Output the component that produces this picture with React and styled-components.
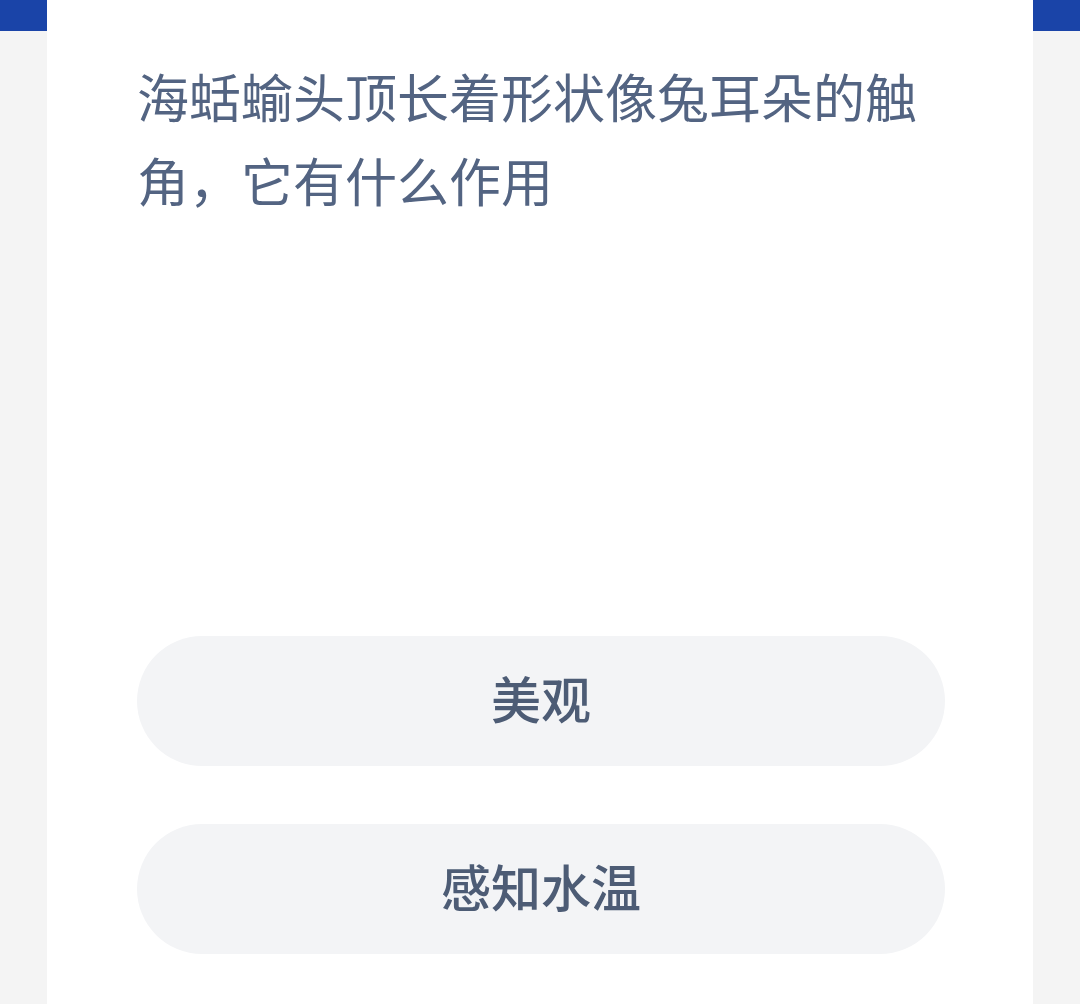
import React from 'react';
import styled, { createGlobalStyle } from 'styled-components';

const GlobalStyle = createGlobalStyle`
  html, body {
    margin: 0;
    padding: 0;
  }
  body {
    font-family: 'Noto Sans CJK SC', 'Noto Sans', sans-serif;
    background: #f4f4f4;
  }
`

const Page = styled.div`
  min-height: 1004px;
  background: linear-gradient(#1a44a8 0 31px, #f4f4f4 31px);
  padding: 0 47px;
  display: flex;
  flex-direction: column;
`

const Card = styled.section`
  flex: 1;
  background: #ffffff;
  padding: 54px 88px 0 90px;
  display: flex;
  flex-direction: column;
`

const Question = styled.h2`
  margin: 0;
  font-size: 52px;
  line-height: 84px;
  font-weight: 400;
  color: #536482;
`

const Options = styled.div`
  margin-top: 414px;
  display: flex;
  flex-direction: column;
  gap: 58px;
`

const Option = styled.button`
  height: 130px;
  padding: 0 0 9px;
  border: none;
  border-radius: 66px;
  background: #f3f4f6;
  font-family: 'Noto Sans CJK SC', 'Noto Sans', sans-serif;
  font-size: 50px;
  font-weight: 500;
  color: #4d5c75;
  cursor: pointer;
`

const App = () => {
    const options = ['美观', '感知水温'];

    return (
        <>
            <GlobalStyle />
            <Page>
                <Card>
                    <Question>海蛞蝓头顶长着形状像兔耳朵的触角，它有什么作用</Question>
                    <Options>
                        {options.map(text => (
                            <Option key={text}>{text}</Option>
                        ))}
                    </Options>
                </Card>
            </Page>
        </>
    )
}

export default App;
